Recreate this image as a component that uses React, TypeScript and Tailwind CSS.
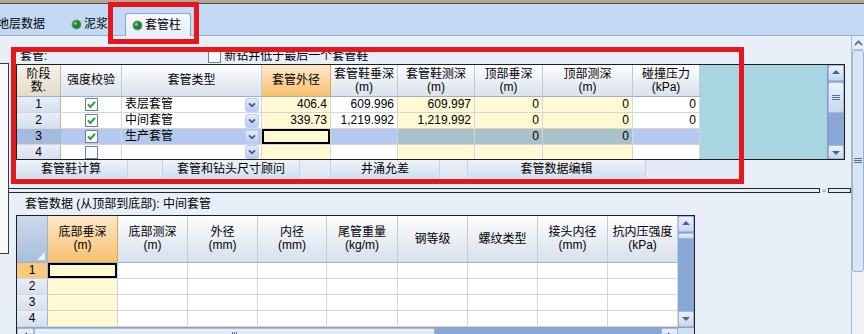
import React from 'react';

type URow = {
  n: string;
  on: boolean;
  type: string;
  od: string;
  stv: string;
  smd: string;
  ttv: string;
  tmd: string;
  bp: string;
  sel?: boolean;
};

const upperRows: URow[] = [
  { n: '1', on: true, type: '表层套管', od: '406.4', stv: '609.996', smd: '609.997', ttv: '0', tmd: '0', bp: '0' },
  { n: '2', on: true, type: '中间套管', od: '339.73', stv: '1,219.992', smd: '1,219.992', ttv: '0', tmd: '0', bp: '0' },
  { n: '3', on: true, type: '生产套管', od: '', stv: '', smd: '', ttv: '0', tmd: '0', bp: '', sel: true },
  { n: '4', on: false, type: '', od: '', stv: '', smd: '', ttv: '', tmd: '', bp: '' },
];

const lowerHeads = [
  { w: 'w-[70px]', t: ['底部垂深', '(m)'], sel: true },
  { w: 'w-[70px]', t: ['底部测深', '(m)'] },
  { w: 'w-[70px]', t: ['外径', '(mm)'] },
  { w: 'w-[69px]', t: ['内径', '(mm)'] },
  { w: 'w-[71px]', t: ['尾管重量', '(kg/m)'] },
  { w: 'w-[70px]', t: ['钢等级'] },
  { w: 'w-[70px]', t: ['螺纹类型'] },
  { w: 'w-[70px]', t: ['接头内径', '(mm)'] },
  { w: 'w-[70px]', t: ['抗内压强度', '(kPa)'] },
];

function Dot() {
  return (
    <svg width="11" height="11" viewBox="0 0 11 11">
      <circle cx="5.5" cy="5.5" r="5" fill="#8e968e" />
      <circle cx="5.5" cy="5.5" r="4" fill="#16862a" />
      <circle cx="4.4" cy="4.3" r="1.6" fill="#7ad27e" />
    </svg>
  );
}

function Check({ on }: { on: boolean }) {
  return (
    <svg width="13" height="13" viewBox="0 0 13 13">
      <rect x="0.5" y="0.5" width="12" height="12" fill="#fbfcfb" stroke="#6d8290" />
      {on && <path d="M3 6.4 5.4 9 10 3.8" fill="none" stroke="#21a336" strokeWidth="2" />}
    </svg>
  );
}

function Drop() {
  return (
    <svg width="14" height="14" viewBox="0 0 14 14">
      <defs>
        <linearGradient id="dg" x1="0" y1="0" x2="0" y2="1">
          <stop offset="0" stopColor="#e4edfb" />
          <stop offset="1" stopColor="#b7cbee" />
        </linearGradient>
      </defs>
      <rect x="0.5" y="0.5" width="13" height="13" rx="2" fill="url(#dg)" stroke="#bccce8" />
      <path d="M4 5.3 7 8.3 10 5.3" fill="none" stroke="#3f5a90" strokeWidth="1.8" />
    </svg>
  );
}

function Tri({ dir }: { dir: 'up' | 'down' | 'left' | 'right' }) {
  const pts = {
    up: '1,6 5,2 9,6',
    down: '1,3 5,7 9,3',
    left: '6,1 2,5 6,9',
    right: '3,1 7,5 3,9',
  }[dir];
  return (
    <svg width="10" height="10" viewBox="0 0 10 10">
      <polygon points={pts} fill="#4e6184" />
    </svg>
  );
}

function Grip({ vertical }: { vertical?: boolean }) {
  return vertical ? (
    <svg width="8" height="6" viewBox="0 0 8 6">
      <path d="M0 0.5H8M0 2.5H8M0 4.5H8" stroke="#5b6e90" strokeWidth="1" />
    </svg>
  ) : (
    <svg width="6" height="8" viewBox="0 0 6 8">
      <path d="M0.5 0V8M2.5 0V8M4.5 0V8" stroke="#5b6e90" strokeWidth="1" />
    </svg>
  );
}

const scrollBtn =
  'shrink-0 flex items-center justify-center bg-linear-to-b from-[#eaf1fb] to-[#c9d8ef] border border-[#a6badb] rounded-[2px]';

function UpperRow({ r, last }: { r: URow; last?: boolean }) {
  const yellow = 'bg-[#fffad4]';
  const blue = 'bg-[#b5c9ee]';
  const teal = 'bg-[#a9c1c8]';
  const c = 'h-full flex items-center border-r border-[#d6d6d6]';
  const num = `${c} justify-end pr-[3px]`;
  return (
    <div className={`flex ${last ? 'h-[14px]' : 'h-[16px] border-b border-[#d6d6d6]'}`}>
      <div
        className={`w-[44px] h-full flex items-center justify-center border-r border-[#a5b6cf] ${
          r.sel ? 'bg-[#a4badf]' : 'bg-linear-to-b from-[#e8eef8] to-[#d5e0ef]'
        }`}
      >
        {r.n}
      </div>
      <div className={`w-[61px] ${c} justify-center ${r.sel ? blue : 'bg-white'}`}>
        <Check on={r.on} />
      </div>
      <div className={`w-[140px] ${c} justify-between pl-[3px] pr-[2px] ${r.sel ? blue : 'bg-white'}`}>
        <span>{r.type}</span>
        <Drop />
      </div>
      <div className={`w-[69px] ${num} ${yellow} ${r.sel ? 'shadow-[inset_0_0_0_2px_#000]' : ''}`}>{r.od}</div>
      <div className={`w-[67px] ${num} ${r.sel ? blue : 'bg-white'}`}>{r.stv}</div>
      <div className={`w-[77px] ${num} ${r.sel ? teal : yellow}`}>{r.smd}</div>
      <div className={`w-[68px] ${num} ${r.sel ? teal : yellow}`}>{r.ttv}</div>
      <div className={`w-[90px] ${num} ${r.sel ? teal : yellow}`}>{r.tmd}</div>
      <div className={`w-[67px] ${num} ${r.sel ? blue : 'bg-white'}`}>{r.bp}</div>
    </div>
  );
}

function UpperGrid() {
  const hd =
    'h-full flex flex-col items-center justify-center border-r border-[#bfc9d7] bg-linear-to-b from-[#fdfdfe] to-[#d9e2ee] leading-[13px] text-center';
  return (
    <div className="ml-[16px] w-[829px] h-[96px] flex border border-[#1e1e1e] bg-white">
      <div className="w-[683px] flex flex-col">
        <div className="h-[32px] shrink-0 flex border-b border-[#9fb0c7]">
          <div className="w-[44px] h-full flex flex-col items-center justify-center leading-[13px] border-r border-[#c0b9a4] bg-linear-to-b from-[#f6f2e8] to-[#e3dcc8]">
            <span>阶段</span>
            <span>数.</span>
          </div>
          <div className={`w-[61px] ${hd}`}>强度校验</div>
          <div className={`w-[140px] ${hd}`}>套管类型</div>
          <div className="w-[69px] h-full flex items-center justify-center border-r border-[#d9a65c] bg-linear-to-b from-[#fde9c9] to-[#f7bf6e]">
            套管外径
          </div>
          <div className={`w-[67px] ${hd}`}>
            <span>套管鞋垂深</span>
            <span>(m)</span>
          </div>
          <div className={`w-[77px] ${hd}`}>
            <span>套管鞋测深</span>
            <span>(m)</span>
          </div>
          <div className={`w-[68px] ${hd}`}>
            <span>顶部垂深</span>
            <span>(m)</span>
          </div>
          <div className={`w-[90px] ${hd}`}>
            <span>顶部测深</span>
            <span>(m)</span>
          </div>
          <div className={`w-[67px] ${hd}`}>
            <span>碰撞压力</span>
            <span>(kPa)</span>
          </div>
        </div>
        {upperRows.map((r, i) => (
          <UpperRow key={r.n} r={r} last={i === upperRows.length - 1} />
        ))}
      </div>
      <div className="w-[127px] bg-[#a9d4e2]" />
      <div className="w-[17px] flex flex-col bg-[#88a6d6] border-l border-[#7f9cc8]">
        <div className={`h-[16px] ${scrollBtn}`}>
          <Tri dir="up" />
        </div>
        <div className={`h-[31px] ${scrollBtn} mt-[1px]`}>
          <Grip vertical />
        </div>
        <div className="flex-1" />
        <div className={`h-[14px] ${scrollBtn} items-start pt-[2px]`}>
          <Tri dir="down" />
        </div>
      </div>
    </div>
  );
}

function LowerGrid() {
  const hd =
    'h-full flex flex-col items-center justify-center border-r border-[#c3ccd8] leading-[13px] text-center';
  return (
    <div className="ml-[16px] w-[679px] border border-[#1e1e1e] bg-white">
      <div className="flex">
        <div className="w-[661px]">
          <div className="h-[47px] flex border-b border-[#9fb0c7]">
            <div className="w-[31px] h-full border-r border-[#9fb3cf] bg-linear-to-b from-[#cdd9ea] to-[#a9bedc] flex items-end justify-end p-[2px]">
              <svg width="8" height="8" viewBox="0 0 8 8">
                <polygon points="8,0 8,8 0,8" fill="#eef3fa" />
              </svg>
            </div>
            {lowerHeads.map((h) => (
              <div
                key={h.t[0]}
                className={`${h.w} ${hd} ${
                  h.sel
                    ? 'bg-linear-to-b from-[#fde9c9] to-[#f7bf6e] border-[#d9a65c]'
                    : 'bg-linear-to-b from-[#fdfdfe] to-[#d7e0ec]'
                }`}
              >
                {h.t.map((s) => (
                  <span key={s}>{s}</span>
                ))}
              </div>
            ))}
          </div>
          {['1', '2', '3', '4'].map((n) => (
            <div key={n} className="h-[16px] flex border-b border-[#d6d6d6]">
              <div
                className={`w-[31px] h-full flex items-center justify-center border-r border-[#a5b6cf] ${
                  n === '1' ? 'bg-[#f8c97f]' : 'bg-linear-to-b from-[#e8eef8] to-[#d5e0ef]'
                }`}
              >
                {n}
              </div>
              {lowerHeads.map((h, i) => (
                <div
                  key={h.t[0]}
                  className={`${h.w} h-full border-r border-[#d6d6d6] ${
                    i === 0 ? 'bg-[#fffad4]' : 'bg-white'
                  } ${i === 0 && n === '1' ? 'shadow-[inset_0_0_0_2px_#000]' : ''}`}
                />
              ))}
            </div>
          ))}
        </div>
        <div className="w-[16px] flex flex-col bg-[#88a6d6]">
          <div className={`h-[16px] ${scrollBtn}`}>
            <Tri dir="up" />
          </div>
          <div className={`h-[6px] ${scrollBtn} mt-[1px]`} />
          <div className="flex-1" />
          <div className={`h-[16px] ${scrollBtn}`}>
            <Tri dir="down" />
          </div>
        </div>
      </div>
      <div className="h-[17px] flex bg-[#88a6d6] border-t border-[#8ea4c4]">
        <div className={`w-[17px] ${scrollBtn}`}>
          <Tri dir="left" />
        </div>
        <div className={`w-[401px] ${scrollBtn}`}>
          <Grip />
        </div>
        <div className="flex-1" />
        <div className={`w-[17px] ${scrollBtn}`}>
          <Tri dir="right" />
        </div>
        <div className="w-[16px] bg-[#d3dfef]" />
      </div>
    </div>
  );
}

export default function App() {
  return (
    <div className="relative w-[864px] h-[334px] overflow-hidden bg-[#e9eff8] text-[12px] leading-[15px] text-black font-['Liberation_Sans','Noto_Sans_CJK_SC',sans-serif]">
      <div className="h-[3px] bg-[#b5a88f]" />
      <div className="h-[1px] bg-[#4d4d4d]" />

      {/* tab strip */}
      <div className="h-[32px] flex items-end bg-[#c3daf7] border-b border-[#98acc2]">
        <div className="h-[22px] flex items-center ml-[-3px]">地层数据</div>
        <div className="h-[22px] flex items-center gap-[2px] ml-[26px]">
          <Dot />
          <span>泥浆</span>
        </div>
        <div className="h-[23px] mb-[-1px] ml-[17px] w-[66px] flex items-center gap-[2px] pl-[6px] rounded-t-[3px] border border-b-0 border-[#8ea6c6] bg-linear-to-b from-[#f6f9fe] to-[#e6eef9]">
          <Dot />
          <span>套管柱</span>
        </div>
      </div>

      <div className="flex h-[298px]">
        <div className="w-[851px] shrink-0">
          {/* casing table */}
          <div className="pt-[13px] h-[28px] flex items-end">
            <span className="ml-[20px]">套管:</span>
            <span className="ml-[161px] flex items-center gap-[3px]">
              <Check on={false} />
              <span>新钻井低于最后一个套管鞋</span>
            </span>
          </div>
          <UpperGrid />

          <div className="h-[18px] ml-[15px] w-[725px] flex bg-[#e3eaf5]">
            <div className="w-[113px] flex items-center justify-center bg-linear-to-b from-[#eef3fa] to-[#d3deee] border-r border-[#c6d2e3]">
              套管鞋计算
            </div>
            <div className="w-[35px] bg-linear-to-b from-[#eaf0f8] to-[#dde6f2] border-r border-[#c6d2e3]" />
            <div className="w-[137px] flex items-center justify-center bg-linear-to-b from-[#eef3fa] to-[#d3deee] border-r border-[#c6d2e3]">
              套管和钻头尺寸顾问
            </div>
            <div className="w-[31px] bg-linear-to-b from-[#eaf0f8] to-[#dde6f2] border-r border-[#c6d2e3]" />
            <div className="w-[109px] flex items-center justify-center bg-linear-to-b from-[#eef3fa] to-[#d3deee] border-r border-[#c6d2e3]">
              井涌允差
            </div>
            <div className="w-[28px] bg-linear-to-b from-[#eaf0f8] to-[#dde6f2] border-r border-[#c6d2e3]" />
            <div className="w-[178px] flex items-center justify-center bg-linear-to-b from-[#eef3fa] to-[#d3deee] border-r border-[#c6d2e3]">
              套管数据编辑
            </div>
          </div>

          {/* splitter */}
          <div className="relative mt-[10px] h-[5px] flex">
            <div className="w-[820px] border border-l-0 border-[#262626] bg-[#e6edf6]" />
            <div className="w-[8px] flex items-center justify-center text-[8px] leading-[5px] text-[#8a96a8]">×</div>
            <div className="w-[23px] border border-[#262626] bg-[#e6edf6]" />
          </div>

          <div className="h-[22px] flex items-center pl-[25px]">套管数据 (从顶部到底部): 中间套管</div>
          <LowerGrid />
        </div>

        {/* outer vertical scrollbar */}
        <div className="w-[13px] shrink-0 flex flex-col bg-[#eef2f8] border-l border-[#a9bbd4]">
          <div className="h-[14px] shrink-0 flex items-center justify-center bg-[#e4ecf7] border-b border-[#b3c3da]">
            <svg width="9" height="6" viewBox="0 0 9 6">
              <path d="M1 5 4.5 1.5 8 5" fill="none" stroke="#4e6184" strokeWidth="1.6" />
            </svg>
          </div>
          <div className="h-[222px] shrink-0 flex items-center justify-center rounded-[3px] border border-[#9fb3d1] bg-[#dae4f3]">
            <Grip vertical />
          </div>
        </div>
      </div>

      {/* hidden side panel */}
      <div className="absolute left-0 top-[63px] w-[9px] h-[191px] border-y border-r border-[#3a3a3a] bg-[#f8f9fb]" />

      {/* red highlight boxes */}
      <div className="absolute left-[108px] top-[2px] w-[91px] h-[42px] border-[5px] border-[#e5161c]" />
      <div className="absolute left-[11px] top-[47px] w-[733px] h-[137px] border-[5px] border-[#e5161c]" />
    </div>
  );
}
